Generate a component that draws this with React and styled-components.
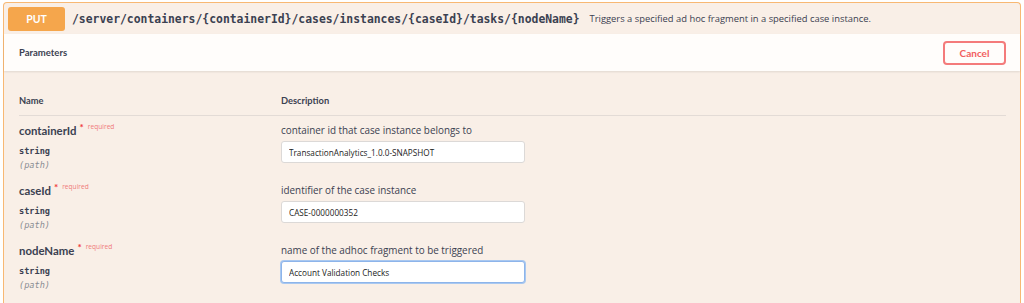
import React from 'react'
import styled, { createGlobalStyle } from 'styled-components'

const GlobalStyle = createGlobalStyle`
  html, body {
    margin: 0;
    padding: 0;
    background: #ffffff;
  }
  body {
    font-family: "Open Sans", sans-serif;
    color: #3b4151;
  }
`

const Page = styled.div`
  padding: 2px 3px 0 3px;
  height: 301px;
  overflow: hidden;
`

const Block = styled.div`
  border: 1px solid #f8b873;
  border-bottom: none;
  border-radius: 4px 4px 0 0;
  background: #f9efe7;
  height: 320px;
`

const Summary = styled.div`
  display: flex;
  align-items: center;
  height: 31px;
  padding: 0 4px;
`

const Method = styled.span`
  display: flex;
  align-items: center;
  justify-content: center;
  width: 57px;
  height: 24px;
  border-radius: 3px;
  background: #f5a64c;
  color: #ffffff;
  font-family: "Lato", sans-serif;
  font-weight: 700;
  font-size: 10.5px;
  margin-right: 7px;
`

const Path = styled.span`
  font-family: "DejaVu Sans Mono", monospace;
  font-weight: 700;
  font-size: 11.4px;
  color: #3b4151;
  margin-right: 10px;
`

const SummaryDesc = styled.span`
  font-family: "Open Sans", sans-serif;
  font-size: 9.4px;
  color: #3b4151;
`

const SectionBar = styled.div`
  display: flex;
  align-items: center;
  justify-content: space-between;
  height: 37px;
  padding: 0 14px 0 15px;
  background: #fffdfb;
  box-shadow: 0 1px 2px rgba(0, 0, 0, 0.1);
`

const SectionTitle = styled.h4`
  margin: 0;
  font-family: "Lato", sans-serif;
  font-weight: 700;
  font-size: 9.5px;
  color: #3b4151;
`

const CancelButton = styled.button`
  width: 63px;
  height: 24px;
  border: 2px solid #f47b7b;
  border-radius: 4px;
  background: transparent;
  color: #f25f5f;
  font-family: "Lato", sans-serif;
  font-weight: 700;
  font-size: 10px;
  padding: 0;
`

const Table = styled.div`
  padding: 0 14px 0 15px;
`

const HeadRow = styled.div`
  display: grid;
  grid-template-columns: 262px 1fr;
  padding: 24px 0 9px;
  border-bottom: 1px solid #e3dbd6;
`

const HeadCell = styled.div`
  font-family: "Lato", sans-serif;
  font-weight: 700;
  font-size: 9.3px;
  line-height: 11px;
  color: #3b4151;
`

const Row = styled.div`
  display: grid;
  grid-template-columns: 262px 1fr;
  height: 60px;
  padding-top: 7px;
  box-sizing: border-box;
`

const NameCell = styled.div`
  display: flex;
  flex-direction: column;
`

const ParamName = styled.div`
  font-family: "Lato", sans-serif;
  font-weight: 700;
  font-size: 11.4px;
  line-height: 15px;
  color: #3b4151;
`

const Star = styled.span`
  color: #f03a3a;
  font-size: 10px;
  position: relative;
  top: -4px;
  margin-left: 3px;
`

const Required = styled.span`
  color: #f07b7b;
  font-family: "Open Sans", sans-serif;
  font-weight: 400;
  font-size: 6.6px;
  position: relative;
  top: -6px;
  margin-left: 4px;
`

const ParamType = styled.div`
  font-family: "DejaVu Sans Mono", monospace;
  font-weight: 600;
  font-size: 8.6px;
  line-height: 12px;
  margin-top: 5px;
  color: #3b4151;
`

const ParamIn = styled.div`
  font-family: "DejaVu Sans Mono", monospace;
  font-style: italic;
  font-size: 8.6px;
  line-height: 12px;
  margin-top: 2px;
  color: #8a8d94;
`

const DescCell = styled.div`
  display: flex;
  flex-direction: column;
`

const DescText = styled.div`
  font-family: "Open Sans", sans-serif;
  font-size: 9.9px;
  line-height: 15px;
  color: #3b4151;
`

const Input = styled.input`
  width: 244px;
  height: 22px;
  box-sizing: border-box;
  margin: 3px 0 0;
  padding: 0 7px;
  border: 1px solid ${p => (p.$focused ? '#8db4ea' : '#dcd9d7')};
  box-shadow: ${p => (p.$focused ? '0 0 0 1px #a9c8f0' : 'none')};
  border-radius: 3px;
  background: #ffffff;
  font-family: "Open Sans", sans-serif;
  font-size: 8.2px;
  color: #222222;
  outline: none;
`

const params = [
  {
    name: 'containerId',
    desc: 'container id that case instance belongs to',
    value: 'TransactionAnalytics_1.0.0-SNAPSHOT',
  },
  { name: 'caseId', desc: 'identifier of the case instance', value: 'CASE-0000000352' },
  {
    name: 'nodeName',
    desc: 'name of the adhoc fragment to be triggered',
    value: 'Account Validation Checks',
    focused: true,
  },
]

export default function App() {
  return (
    <>
      <GlobalStyle />
      <Page>
        <Block>
          <Summary>
            <Method>PUT</Method>
            <Path>/server/containers/{'{containerId}'}/cases/instances/{'{caseId}'}/tasks/{'{nodeName}'}</Path>
            <SummaryDesc>Triggers a specified ad hoc fragment in a specified case instance.</SummaryDesc>
          </Summary>
          <SectionBar>
            <SectionTitle>Parameters</SectionTitle>
            <CancelButton>Cancel</CancelButton>
          </SectionBar>
          <Table>
            <HeadRow>
              <HeadCell>Name</HeadCell>
              <HeadCell>Description</HeadCell>
            </HeadRow>
            {params.map(p => (
              <Row key={p.name}>
                <NameCell>
                  <ParamName>
                    {p.name}
                    <Star>*</Star>
                    <Required>required</Required>
                  </ParamName>
                  <ParamType>string</ParamType>
                  <ParamIn>(path)</ParamIn>
                </NameCell>
                <DescCell>
                  <DescText>{p.desc}</DescText>
                  <Input $focused={p.focused} defaultValue={p.value} />
                </DescCell>
              </Row>
            ))}
          </Table>
        </Block>
      </Page>
    </>
  )
}
